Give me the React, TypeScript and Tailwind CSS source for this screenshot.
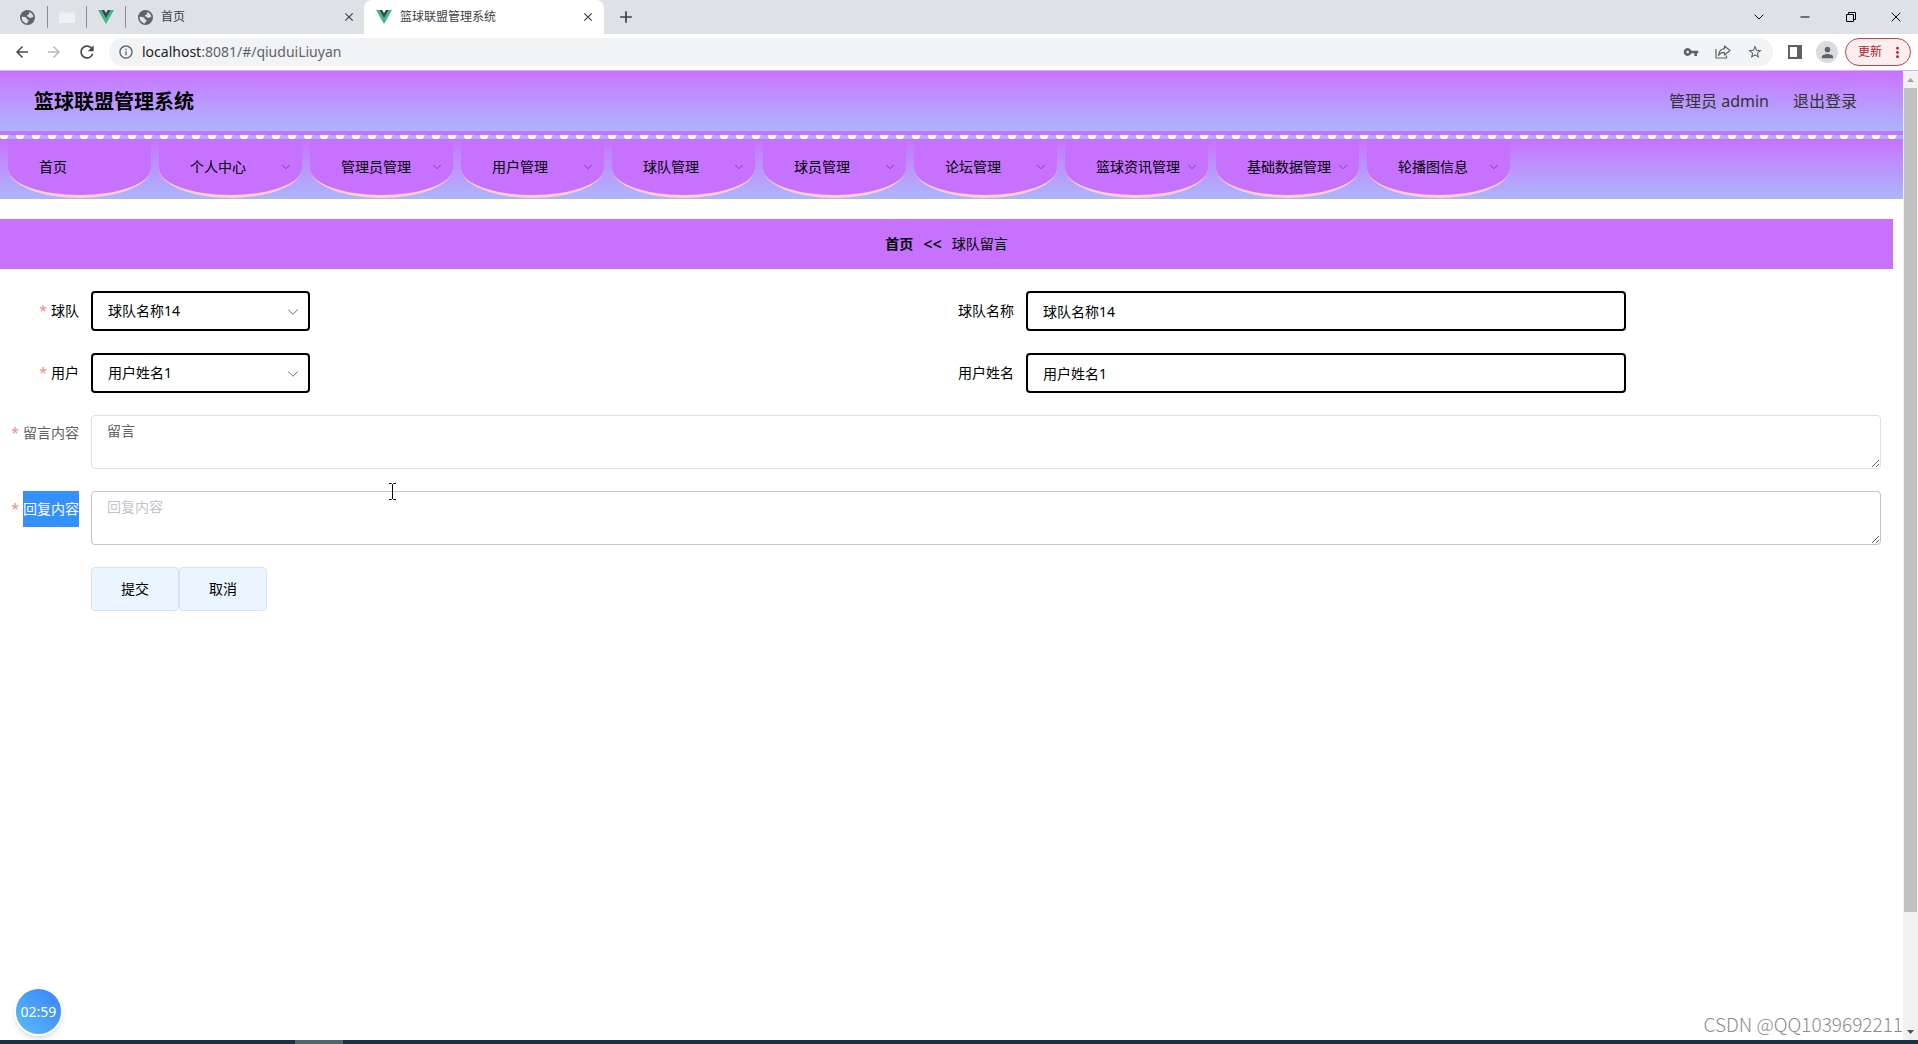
import { useState } from 'react';
import { ChevronDown, Minus, X } from 'lucide-react';
import {
  MdAdd,
  MdArrowBack,
  MdArrowForward,
  MdClose,
  MdInfoOutline,
  MdMoreVert,
  MdPerson,
  MdRefresh,
  MdStarBorder,
  MdVpnKey,
} from 'react-icons/md';

const menus = [
  '个人中心',
  '管理员管理',
  '用户管理',
  '球队管理',
  '球员管理',
  '论坛管理',
  '篮球资讯管理',
  '基础数据管理',
  '轮播图信息',
];

function Globe() {
  return (
    <svg viewBox="0 0 16 16" className="w-[15px] h-[15px] shrink-0" aria-hidden="true">
      <circle cx="8" cy="8" r="8" fill="#5f6368" />
      <path d="M1.700 7.500c1.300-.4 3.600-.5 4.800.4 1 .8.300 1.800 1.500 2.200 1.200.3 1.600 1 .9 2-.5.800-1.200 1-1.300 2.200C4 14 1.600 11 1.700 7.500z" fill="#dee1e6" />
      <path d="M9.800 2c2.300.7 4.200 2.600 4.500 5.200-.8.900-1.700.2-2.300 1-.7.800-1.500.6-2-.2-.6-1-2.500-.7-2.500-2 0-1.200 1.800-.8 2.200-1.800.3-.8-.3-1.400.1-2.200z" fill="#dee1e6" />
    </svg>
  );
}

function VueLogo() {
  return (
    <svg viewBox="0 0 16 14" className="w-4 h-[14px] shrink-0" aria-hidden="true">
      <path d="M0 0h3.2L8 8.3 12.8 0H16L8 14z" fill="#41b883" />
      <path d="M3.2 0h3L8 3.1 9.8 0h3L8 8.3z" fill="#34495e" />
    </svg>
  );
}

function TabStrip() {
  return (
    <div className="flex items-center h-[34px] bg-[#dee1e6] text-[#3c4043]">
      <div className="flex items-center h-[22px] pl-5">
        <button aria-label="固定标签页" className="w-7 h-full border-r border-[#8b8e93]">
          <Globe />
        </button>
        <button aria-label="固定标签页" className="w-[39px] h-full border-r border-[#8b8e93] flex items-center justify-center">
          <span className="w-4 h-3 bg-[#f0f1f3] border-t-2 border-[#e4e6e8]" />
        </button>
        <button aria-label="固定标签页" className="w-[39px] h-full border-r border-[#8b8e93] flex items-center justify-center">
          <VueLogo />
        </button>
      </div>
      <div className="flex items-center w-[238px] pl-[12px] pr-2">
        <Globe />
        <span className="text-xs ml-2 flex-1">首页</span>
        <button aria-label="关闭">
          <MdClose size={14} />
        </button>
      </div>
      <div className="flex items-center w-[240px] h-full pl-3 pr-[9px] bg-white rounded-t-lg">
        <VueLogo />
        <span className="text-xs ml-2 flex-1">篮球联盟管理系统</span>
        <button aria-label="关闭">
          <MdClose size={14} />
        </button>
      </div>
      <button aria-label="新标签页" className="ml-3">
        <MdAdd size={20} />
      </button>
      <div className="ml-auto flex items-center h-7 text-black">
        <button aria-label="搜索标签页" className="w-[46px] flex justify-center">
          <ChevronDown size={16} strokeWidth={1.5} />
        </button>
        <button aria-label="最小化" className="w-[46px] flex justify-center">
          <Minus size={14} strokeWidth={2} />
        </button>
        <button aria-label="还原" className="w-[46px] flex justify-center">
          <svg width="12" height="12" viewBox="0 0 12 12" fill="none" stroke="currentColor">
            <path d="M1.500 3.500h7v7h-7zM3.500 3.500v-2h7v7h-2" />
          </svg>
        </button>
        <button aria-label="关闭窗口" className="w-[44px] flex justify-center">
          <X size={16} strokeWidth={1.5} />
        </button>
      </div>
    </div>
  );
}

function AddressBar() {
  return (
    <div className="flex items-center h-9 bg-white pl-[13px] pr-[7px] text-[#5f6368]">
      <div className="flex items-center gap-[14px] mr-3 shrink-0">
        <button aria-label="后退">
          <MdArrowBack size={18} className="text-[#45494d]" />
        </button>
        <button aria-label="前进">
          <MdArrowForward size={18} className="text-[#b9bbbe]" />
        </button>
        <button aria-label="刷新">
          <MdRefresh size={20} className="text-[#45494d]" />
        </button>
      </div>
      <div className="flex-1 flex items-center h-7 rounded-full bg-[#f1f3f4] pl-[9px] pr-[10px]">
        <MdInfoOutline size={16} className="mr-2" />
        <span className="text-sm flex-1">
          <span className="text-[#202124]">localhost</span>:8081/#/qiuduiLiuyan
        </span>
        <div className="flex items-center gap-4">
          <MdVpnKey size={16} />
          <svg width="16" height="16" viewBox="0 0 16 16" fill="none" stroke="currentColor" strokeWidth="1.2">
            <path d="M1 5v9h10.500v-2.500" />
            <path d="M9.500 2l5.500 4.500-5.500 4.500V8.300C6.500 8.300 4.800 9.500 3.500 11.500 4 7.500 6 5 9.500 4.700z" strokeLinejoin="round" />
          </svg>
          <MdStarBorder size={16} />
        </div>
      </div>
      <div className="flex items-center ml-[15px] shrink-0">
        <svg width="14" height="14" viewBox="0 0 14 14" aria-hidden="true">
          <path d="M1 1h12v12H1z" fill="none" stroke="currentColor" strokeWidth="2" />
          <path d="M9 1h4v12H9z" fill="currentColor" />
        </svg>
        <button aria-label="用户" className="ml-[14px] w-[22px] h-[22px] rounded-full bg-[#dadce0] flex items-center justify-center">
          <MdPerson size={17} />
        </button>
        <button className="ml-[7px] flex items-center w-[66px] h-7 pl-3 pr-1 rounded-full border border-[#c5404a] bg-[#fceeee] text-xs text-[#b3242f]">
          更新
          <MdMoreVert size={17} className="ml-auto" />
        </button>
      </div>
    </div>
  );
}

function Header() {
  return (
    <header>
      <div className="flex items-center h-[60px] pl-[34px] pr-[46px] bg-linear-to-b from-[#c771ff] to-[#abb5fb]">
        <h1 className="pt-[2px] text-xl font-bold text-black">篮球联盟管理系统</h1>
        <div className="ml-auto flex items-center gap-6 text-base text-[#333]">
          <span>管理员 admin</span>
          <button>退出登录</button>
        </div>
      </div>
      <div className="h-1 bg-[#c771ff]" />
      <div className="h-1 bg-[#b3acfa] bg-[radial-gradient(circle_at_4px_0px,#fff_4px,transparent_5px)] bg-size-[16px_4px]" />
      <nav className="flex gap-2 h-[60px] pl-2 bg-linear-to-b from-[#c771ff] to-[#abb5fb]">
        <a
          href="#/"
          className="flex items-center w-[143px] h-[59px] pl-[31px] text-sm text-black bg-[#c771ff] border-b-3 border-[#ffcccc] rounded-b-[50%]"
        >
          首页
        </a>
        {menus.map((menu) => (
          <button
            key={menu}
            className="flex items-center justify-between w-[143px] h-[59px] pl-[31px] pr-[9px] text-sm text-black bg-[#c771ff] border-b-3 border-[#ffcccc] rounded-b-[50%]"
          >
            {menu}
            <ChevronDown size={14} strokeWidth={1.5} className="text-[#6b4489]" />
          </button>
        ))}
      </nav>
    </header>
  );
}

function Label({ htmlFor, text, required, className }: { htmlFor: string; text: string; required?: boolean; className: string }) {
  return (
    <label htmlFor={htmlFor} className={`flex justify-end w-20 pr-3 shrink-0 text-sm whitespace-nowrap ${className}`}>
      {required && <span className="mr-1 text-[#f78989]">*</span>}
      {text}
    </label>
  );
}

function SelectBox({ id, value }: { id: string; value: string }) {
  return (
    <div className="relative w-[219px]">
      <select id={id} className="w-full h-10 px-[15px] appearance-none rounded border-2 border-black bg-white text-sm text-black">
        <option>{value}</option>
      </select>
      <ChevronDown size={18} strokeWidth={1.25} className="absolute right-2 top-3 text-[#606266] pointer-events-none" />
    </div>
  );
}

function MessageForm() {
  const [form, setForm] = useState({
    teamName: '球队名称14',
    userName: '用户姓名1',
    message: '留言',
    reply: '',
  });

  const inputClass = 'w-[600px] h-10 px-[15px] rounded border-2 border-black bg-white text-sm text-black';
  const areaClass = 'block flex-1 h-[54px] px-[15px] py-[5px] rounded border text-sm leading-5 text-[#606266] placeholder:text-[#c0c4cc]';

  return (
    <form className="pl-[11px] pr-3 pt-[22px] flex flex-col gap-[22px]" onSubmit={(e) => e.preventDefault()}>
      <div className="grid grid-cols-2 gap-y-[22px]">
        <div className="flex">
          <Label htmlFor="team" text="球队" required className="text-black leading-10" />
          <SelectBox id="team" value="球队名称14" />
        </div>
        <div className="flex">
          <Label htmlFor="teamName" text="球队名称" className="text-black leading-10" />
          <input
            id="teamName"
            value={form.teamName}
            onChange={(e) => setForm({ ...form, teamName: e.target.value })}
            className={inputClass}
          />
        </div>
        <div className="flex">
          <Label htmlFor="user" text="用户" required className="text-black leading-10" />
          <SelectBox id="user" value="用户姓名1" />
        </div>
        <div className="flex">
          <Label htmlFor="userName" text="用户姓名" className="text-black leading-10" />
          <input
            id="userName"
            value={form.userName}
            onChange={(e) => setForm({ ...form, userName: e.target.value })}
            className={inputClass}
          />
        </div>
      </div>

      <div className="flex">
        <Label htmlFor="message" text="留言内容" required className="text-[#606266] leading-9" />
        <textarea
          id="message"
          value={form.message}
          onChange={(e) => setForm({ ...form, message: e.target.value })}
          className={`${areaClass} border-[#dcdfe6]`}
        />
      </div>

      <div className="flex">
        <label htmlFor="reply" className="flex justify-end w-20 pr-3 shrink-0 text-sm whitespace-nowrap leading-9">
          <span className="mr-1 text-[#f78989]">*</span>
          <span className="h-9 bg-[#3390ff] text-white">回复内容</span>
        </label>
        <textarea
          id="reply"
          value={form.reply}
          placeholder="回复内容"
          onChange={(e) => setForm({ ...form, reply: e.target.value })}
          className={`${areaClass} border-[#c0c4cc]`}
        />
      </div>

      <div className="flex pl-20">
        {['提交', '取消'].map((action) => (
          <button key={action} className="w-22 h-11 rounded border border-[#d9e1ec] bg-[#ebf5ff] text-sm text-black">
            {action}
          </button>
        ))}
      </div>
    </form>
  );
}

function Scrollbar() {
  return (
    <div className="flex flex-col items-center w-[15px] shrink-0 bg-[#f1f1f1]">
      <span className="flex items-center h-[17px]">
        <svg width="7" height="4" viewBox="0 0 7 4">
          <path d="M0 4l3.500-4L7 4z" fill="#a3a3a3" />
        </svg>
      </span>
      <span className="w-[13px] basis-[85%] bg-[#c1c1c1]" />
      <span className="flex items-center h-[17px] mt-auto">
        <svg width="7" height="4" viewBox="0 0 7 4">
          <path d="M0 0l3.500 4L7 0z" fill="#505050" />
        </svg>
      </span>
    </div>
  );
}

export default function App() {
  return (
    <div className="relative flex flex-col min-h-screen bg-white font-['Noto_Sans','Noto_Sans_CJK_SC',sans-serif]">
      <TabStrip />
      <AddressBar />
      <div className="flex flex-1 border-t border-[#d9b3f5]">
        <div className="flex-1">
          <Header />
          <main className="pt-5 pr-[10px]">
            <div className="flex items-center justify-center gap-[10px] h-[50px] bg-[#c771ff] text-sm text-black">
              <a href="#/" className="font-bold">
                首页
              </a>
              <span className="text-base font-semibold">&lt;&lt;</span>
              <span>球队留言</span>
            </div>
            <MessageForm />
          </main>
        </div>
        <Scrollbar />
      </div>
      <div className="h-1 bg-[#1c3043] pl-[295px]">
        <div className="w-12 h-full bg-[#50646e]" />
      </div>

      {/* Mouse pointer */}
      <svg className="absolute left-[388px] top-[483px] pointer-events-none" width="9" height="17" viewBox="0 0 9 17" fill="none" stroke="#000">
        <path d="M1 .5h2.500l1 1 1-1H8M4.500 1.500v14M1 16.500h2.500l1-1 1 1H8" />
      </svg>

      {/* Recording timer */}
      <div className="absolute left-[14px] bottom-2 w-[49px] h-[49px] rounded-full border-2 border-white bg-linear-to-tr from-[#5bbcfb] to-[#3b82f6] shadow-md flex items-center justify-center text-sm text-white">
        02:59
      </div>

      <div className="absolute right-[15px] bottom-2 text-[19px] leading-6 font-light text-[#8c8c8c] font-['Noto_Sans_CJK_SC',sans-serif]">
        CSDN @QQ1039692211
      </div>
    </div>
  );
}
